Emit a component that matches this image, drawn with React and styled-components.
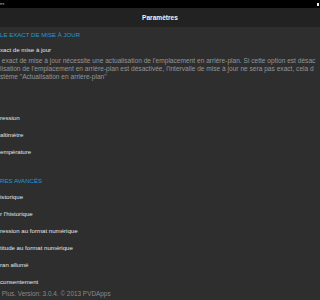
import React from "react";
import styled, { createGlobalStyle } from "styled-components";

const Global = createGlobalStyle`
  html, body { margin: 0; padding: 0; background: #2e2e2e; }
  body { font-family: "Liberation Sans", Arial, sans-serif; }
`;

const Page = styled.div`
  width: 320px;
  height: 300px;
  overflow: hidden;
  display: flex;
  flex-direction: column;
  background: #2e2e2e;
`;

const StatusBar = styled.div`
  height: 8px;
  background: #000;
  display: flex;
  align-items: center;
  justify-content: space-between;
  padding-right: 1px;
  flex-shrink: 0;
`;

const Carrier = styled.span`
  font-size: 4px;
  line-height: 8px;
  color: #ddd;
`;

const Battery = styled.span`
  width: 2px;
  height: 3px;
  background: #eee;
`;

const NavBar = styled.div`
  height: 19px;
  background: #222222;
  display: flex;
  align-items: center;
  justify-content: center;
  flex-shrink: 0;
`;

const Title = styled.span`
  font-size: 6.6px;
  font-weight: bold;
  color: #f4f4f4;
`;

const Content = styled.div`
  display: flex;
  flex-direction: column;
`;

const SectionHeader = styled.div`
  height: ${(p) => p.$h}px;
  margin-top: ${(p) => p.$mt || 0}px;
  display: flex;
  align-items: center;
  font-size: 6.1px;
  color: #1c9ad8;
  white-space: nowrap;
`;

const Row = styled.div`
  height: ${(p) => p.$h || 17}px;
  margin-top: ${(p) => p.$mt || 0}px;
  display: flex;
  align-items: center;
  font-size: 6.1px;
  color: #e4e4e4;
  white-space: nowrap;
`;

const Description = styled.div`
  display: flex;
  flex-direction: column;
  margin-top: 1px;
  font-size: 6.6px;
  line-height: 8px;
  color: #969696;
`;

const DescLine = styled.span`
  white-space: pre;
`;

const Footer = styled.div`
  font-size: 6.4px;
  line-height: 7px;
  color: #8a8a8a;
  white-space: pre;
`;

export default function App() {
  return (
    <>
      <Global />
      <Page>
        <StatusBar>
          <Carrier>rrr.</Carrier>
          <Battery />
        </StatusBar>
        <NavBar>
          <Title>Paramètres</Title>
        </NavBar>
        <Content>
          <SectionHeader $h={14}>LE EXACT DE MISE À JOUR</SectionHeader>
          <Row $h={14} $mt={1}>xact de mise à jour</Row>
          <Description>
            <DescLine> exact de mise à jour nécessite une actualisation de l'emplacement en arrière-plan. Si cette option est désac</DescLine>
            <DescLine>lisation de l'emplacement en arrière-plan est désactivée, l'intervalle de mise à jour ne sera pas exact, cela d</DescLine>
            <DescLine>stème "Actualisation en arrière-plan"</DescLine>
          </Description>
          <Row $mt={28}>ression</Row>
          <Row>altimètre</Row>
          <Row>empérature</Row>
          <SectionHeader $h={16} $mt={12}>RES AVANCÉS</SectionHeader>
          <Row>istorique</Row>
          <Row>r l'historique</Row>
          <Row>ression au format numérique</Row>
          <Row>titude au format numérique</Row>
          <Row>ran allumé</Row>
          <Row>consentement</Row>
          <Footer> Plus. Version: 3.0.4. © 2013 PVDApps</Footer>
        </Content>
      </Page>
    </>
  );
}
